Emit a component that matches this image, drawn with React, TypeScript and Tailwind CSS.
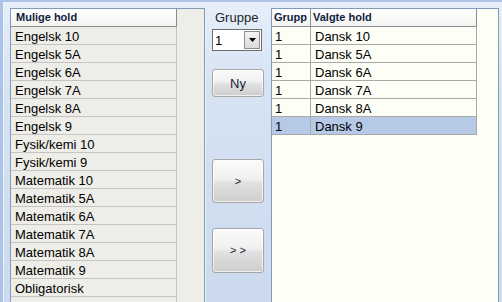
import React from "react";

const leftItems = [
  "Engelsk 10",
  "Engelsk 5A",
  "Engelsk 6A",
  "Engelsk 7A",
  "Engelsk 8A",
  "Engelsk 9",
  "Fysik/kemi 10",
  "Fysik/kemi 9",
  "Matematik 10",
  "Matematik 5A",
  "Matematik 6A",
  "Matematik 7A",
  "Matematik 8A",
  "Matematik 9",
  "Obligatorisk",
  "",
];

const rightItems = ["Dansk 10", "Dansk 5A", "Dansk 6A", "Dansk 7A", "Dansk 8A", "Dansk 9"];

const font = { fontFamily: '"Liberation Sans", Arial, sans-serif' } as React.CSSProperties;

function VistaButton({ label, h, small }: { label: string; h: string; small?: boolean }) {
  return (
    <div
      className={`w-[52px] ${h} rounded-[3px] border border-[#a7a7a7] bg-[linear-gradient(#fbfbfb_0%,#f0f0f0_45%,#e0e0e0_55%,#cdcdcd_100%)] flex items-center justify-center shadow-[inset_0_0_0_1px_rgba(255,255,255,0.7)]`}
    >
      <span className={`${small ? "text-[11px]" : "text-[13px]"} text-[#141e3c] leading-none`}>{label}</span>
    </div>
  );
}

export default function App() {
  return (
    <div
      className="w-[502px] h-[302px] overflow-hidden bg-[linear-gradient(#e6eef9_0%,#d6e3f3_30%,#cbdaee_100%)] border-t-2 border-l-[3px] border-[#abc3e6]"
      style={font}
    >
      <div className="h-full border-t border-l border-[#eef3fb] pt-[5px] pl-[6px] flex">
        {/* Left list */}
        <div className="w-[195px] h-[320px] border-l border-t border-r border-[#7f9db9] bg-[#eeede8] flex flex-col shrink-0">
          <div className="flex h-[18px]">
            <div className="w-[166px] h-[18px] border-r border-b border-[#8c8c8c] bg-[linear-gradient(#ffffff,#f3f3f1)] flex items-center pl-[5px]">
              <span className="text-[11px] font-bold text-[#0f1d3d] leading-none">Mulige hold</span>
            </div>
          </div>
          {leftItems.map((t, i) => (
            <div
              key={i}
              className="w-[166px] h-[18px] border-r border-b border-[#c4c4c4] flex items-center pl-[4px] pt-[2px]"
            >
              <span className="text-[13px] text-black leading-none">{t}</span>
            </div>
          ))}
        </div>

        {/* Middle */}
        <div className="w-[66px] shrink-0 border-l border-[#e9f0f9] flex flex-col pl-[6px]">
          <div className="h-[16px] flex items-end pl-[3px]">
            <span className="text-[13px] text-[#1e1e1e] leading-none">Gruppe</span>
          </div>
          <div className="mt-[5px] w-[50px] h-[22px] border border-[#6e6e6e] bg-white flex items-center">
            <span className="flex-1 text-[13px] text-black leading-none pl-[2px]">1</span>
            <div className="w-[16px] h-[18px] mr-[1px] border border-[#8e8f8f] bg-[linear-gradient(#f4f4f4,#d9d9d9)] flex items-center justify-center">
              <svg width="7" height="4" viewBox="0 0 7 4">
                <path d="M0 0H7L3.5 4Z" fill="#000" />
              </svg>
            </div>
          </div>
          <div className="mt-[18px]">
            <VistaButton label="Ny" h="h-[28px]" />
          </div>
          <div className="mt-[62px]">
            <VistaButton label=">" h="h-[44px]" small />
          </div>
          <div className="mt-[25px]">
            <VistaButton label="> >" h="h-[45px]" small />
          </div>
        </div>

        {/* Right list */}
        <div className="w-[228px] h-[320px] border-l border-t border-r border-[#7f9db9] bg-[#fdfef5] flex flex-col shrink-0">
          <div className="flex h-[18px]">
            <div className="w-[39px] h-[18px] border-r border-b border-[#8c8c8c] bg-[linear-gradient(#ffffff,#f3f3f1)] flex items-center pl-[2px]">
              <span className="text-[11px] font-bold text-[#0f1d3d] leading-none">Grupp</span>
            </div>
            <div className="w-[166px] h-[18px] border-r border-b border-[#8c8c8c] bg-[linear-gradient(#ffffff,#f3f3f1)] flex items-center pl-[2px]">
              <span className="text-[11px] font-bold text-[#0f1d3d] leading-none">Valgte hold</span>
            </div>
          </div>
          {rightItems.map((t, i) => (
            <div
              key={i}
              className={`flex h-[18px] w-[205px] ${i === rightItems.length - 1 ? "bg-[#b6cae7]" : ""}`}
            >
              <div className="w-[39px] h-[18px] border-r border-b border-[#a9a9a9] flex items-center pl-[3px] pt-[2px]">
                <span className="text-[13px] text-black leading-none">1</span>
              </div>
              <div className="w-[166px] h-[18px] border-r border-b border-[#a9a9a9] flex items-center pl-[4px] pt-[2px]">
                <span className="text-[13px] text-black leading-none">{t}</span>
              </div>
            </div>
          ))}
        </div>
      </div>
    </div>
  );
}
